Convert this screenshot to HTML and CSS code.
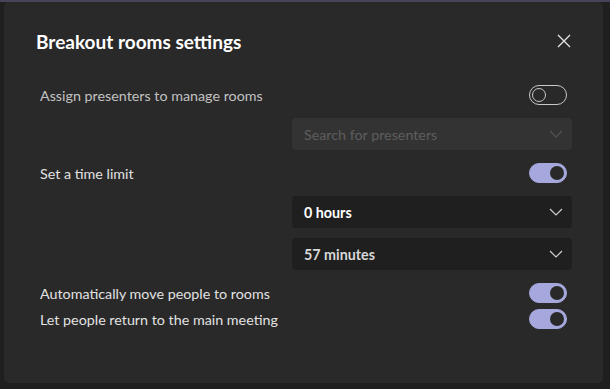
FILE: index.html
```html
<!DOCTYPE html>
<html>

<head>
  <title>Breakout rooms settings</title>
  <link rel="stylesheet" href="styles.css">
</head>

<body>
  <div class="dialog">
    <div class="dialog-header">
      <h1>Breakout rooms settings</h1>
      <button class="close-btn" aria-label="Close">
        <svg width="14" height="14" viewBox="0 0 14 14">
          <path d="M1 1L13 13M13 1L1 13" stroke="#e6e6e6" stroke-width="1.3" fill="none" />
        </svg>
      </button>
    </div>

    <div class="setting-row row-presenters">
      <span class="setting-label muted">Assign presenters to manage rooms</span>
      <span class="toggle"></span>
    </div>

    <div class="select select-disabled row-search">
      <span>Search for presenters</span>
      <svg class="chevron" width="14" height="8" viewBox="0 0 14 8">
        <path d="M1 1L7 7L13 1" stroke="#555555" stroke-width="1.2" fill="none" />
      </svg>
    </div>

    <div class="setting-row row-time">
      <span class="setting-label">Set a time limit</span>
      <span class="toggle on"></span>
    </div>

    <div class="select row-hours">
      <span class="select-value">0 hours</span>
      <svg class="chevron" width="14" height="8" viewBox="0 0 14 8">
        <path d="M1 1L7 7L13 1" stroke="#cfcfcf" stroke-width="1.2" fill="none" />
      </svg>
    </div>

    <div class="select row-minutes">
      <span class="select-value dim">57 minutes</span>
      <svg class="chevron" width="14" height="8" viewBox="0 0 14 8">
        <path d="M1 1L7 7L13 1" stroke="#cfcfcf" stroke-width="1.2" fill="none" />
      </svg>
    </div>

    <div class="setting-row row-auto">
      <span class="setting-label">Automatically move people to rooms</span>
      <span class="toggle on"></span>
    </div>

    <div class="setting-row row-return">
      <span class="setting-label">Let people return to the main meeting</span>
      <span class="toggle on"></span>
    </div>
  </div>
</body>

</html>
```

FILE: styles.css
```css
/* Global styles */
body {
  margin: 0;
  padding: 2px 7px 6px 4px;
  height: 389px;
  box-sizing: border-box;
  font-family: 'Lato', 'Open Sans', sans-serif;
  background: linear-gradient(#46445a 0 2px, #1f1f1f 2px);
  overflow: hidden;
}

/* Dialog */
.dialog {
  display: flex;
  flex-direction: column;
  height: 381px;
  box-sizing: border-box;
  padding: 28px 31px 0 32px;
  background-color: #292929;
  border-radius: 5px;
}

.dialog-header {
  display: flex;
  align-items: center;
  justify-content: space-between;
  height: 22px;
}

.dialog-header h1 {
  margin: 0;
  font-size: 19px;
  font-weight: 700;
  color: #ffffff;
}

.close-btn {
  display: flex;
  padding: 0;
  margin-right: 1px;
  border: none;
  background: none;
  cursor: pointer;
}

/* Setting rows */
.setting-row {
  display: flex;
  align-items: center;
  justify-content: space-between;
  height: 20px;
  padding: 0 5px 0 4px;
}

.setting-label {
  font-size: 14.3px;
  color: #e2e2e2;
}

.setting-label.muted {
  color: #c2c2c2;
}

.row-presenters {
  margin-top: 33px;
}

.row-time {
  margin-top: 13px;
}

.row-auto {
  margin-top: 13px;
}

.row-return {
  margin-top: 6px;
}

/* Toggles */
.toggle {
  position: relative;
  width: 38px;
  height: 20px;
  box-sizing: border-box;
  border: 1px solid #c8c8c8;
  border-radius: 10px;
}

.toggle::after {
  content: '';
  position: absolute;
  top: 2px;
  left: 2px;
  width: 14px;
  height: 14px;
  box-sizing: border-box;
  border: 1px solid #c8c8c8;
  border-radius: 50%;
}

.toggle.on {
  border-color: #a6a7dc;
  background-color: #a6a7dc;
}

.toggle.on::after {
  left: auto;
  right: 2px;
  border: none;
  background-color: #292929;
}

/* Selects */
.select {
  display: flex;
  align-items: center;
  justify-content: space-between;
  align-self: flex-end;
  width: 280px;
  height: 32px;
  box-sizing: border-box;
  padding: 0 9px 0 12px;
  border-radius: 4px;
  background-color: #1f1f1f;
  font-size: 14.3px;
}

.select-disabled {
  background-color: #333333;
  color: #5e5e5e;
}

.select-value {
  font-weight: 700;
  color: #ffffff;
}

.select-value.dim {
  color: #d8d8d8;
}

.row-search {
  margin-top: 13px;
}

.row-hours {
  margin-top: 13px;
}

.row-minutes {
  margin-top: 10px;
}
```
